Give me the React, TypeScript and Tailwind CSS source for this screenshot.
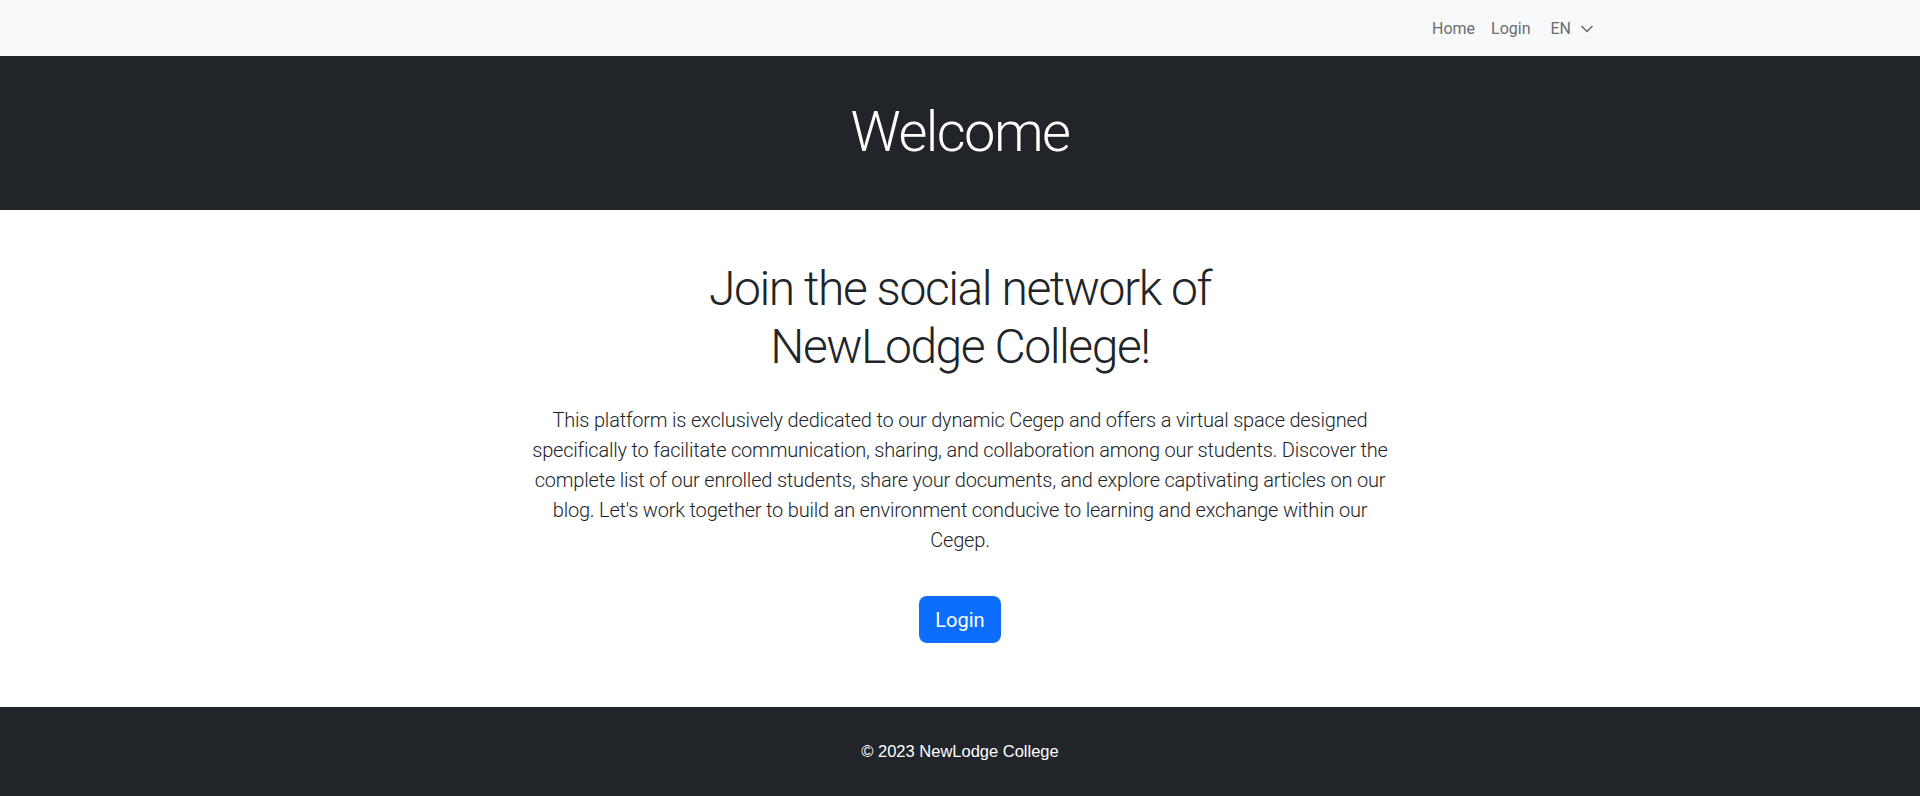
import { ChevronDown } from 'lucide-react';

export default function App() {
    return (
        <div className="min-h-[796px] flex flex-col bg-white text-[#212529]" style={{ fontFamily: 'Roboto, "Noto Sans", sans-serif' }}>
            <nav className="h-14 bg-[#f8f9fa] shrink-0">
                <div className="max-w-[1320px] mx-auto h-full px-3 flex items-center justify-end">
                    <ul className="flex items-center text-[16px] text-[#6b6e71] mr-[3px] pt-[2px]">
                        <li><a className="px-2 py-2 block">Home</a></li>
                        <li><a className="px-2 py-2 block">Login</a></li>
                        <li>
                            <button className="px-2 py-2 ml-1 flex items-center gap-[6px] text-[#6b6e71]">
                                EN
                                <ChevronDown className="w-5 h-5" strokeWidth={2} />
                            </button>
                        </li>
                    </ul>
                </div>
            </nav>

            <header className="h-[154px] bg-[#212529] flex items-center justify-center shrink-0">
                <h1 className="text-[56px] font-light text-white leading-[1.2] tracking-[-0.028em]">Welcome</h1>
            </header>

            <main className="flex-1 flex flex-col items-center text-center pt-[50px]">
                <h2 className="text-[48px] font-light leading-[58px] tracking-[-0.03em]">
                    Join the social network of
                    <br />
                    NewLodge College!
                </h2>
                <div className="w-[884px] px-3 mt-[29px]">
                    <p className="text-[20px] font-light leading-[30px] tracking-[-0.01em]">
                        This platform is exclusively dedicated to our dynamic Cegep and offers a virtual space designed
                        specifically to facilitate communication, sharing, and collaboration among our students. Discover the
                        complete list of our enrolled students, share your documents, and explore captivating articles on our
                        blog. Let's work together to build an environment conducive to learning and exchange within our
                        Cegep.
                    </p>
                    <button className="mt-[41px] h-[47px] px-4 rounded-lg bg-[#0d6efd] text-white text-[20px] leading-[30px]">
                        Login
                    </button>
                </div>
            </main>

            <footer className="h-[89px] bg-[#212529] text-white flex items-center justify-center shrink-0">
                <p className="text-[16.5px]" style={{ fontFamily: '"Liberation Sans", Arial, sans-serif' }}>© 2023 NewLodge College</p>
            </footer>
        </div>
    );
}
